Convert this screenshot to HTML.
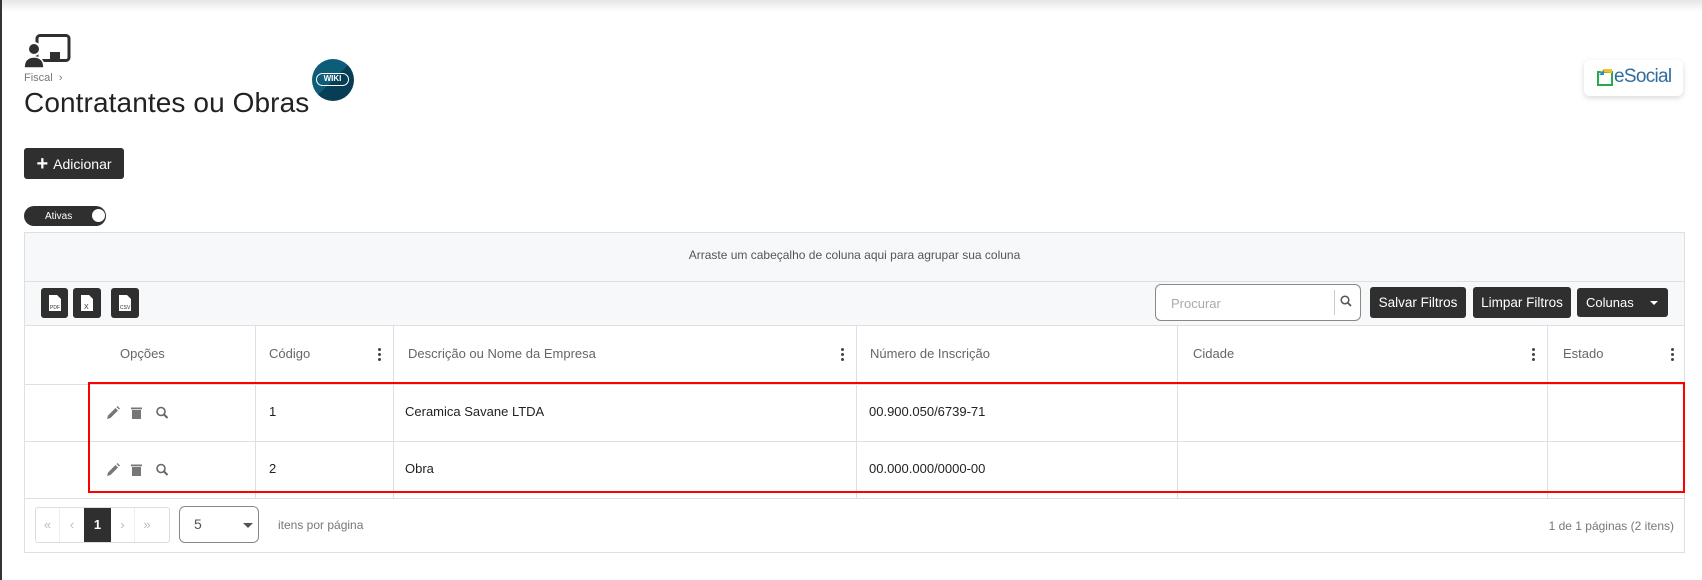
<!DOCTYPE html>
<html><head><meta charset="utf-8"><style>
*{box-sizing:border-box;margin:0;padding:0}
body{width:1702px;height:580px;overflow:hidden;background:#fff;font-family:"Liberation Sans",Arial,sans-serif;position:relative;color:#333}
.a{position:absolute}
.topsh{left:0;top:0;width:1702px;height:12px;background:linear-gradient(#e6e6e6,#fff)}
.lb{left:0;top:0;width:2px;height:580px;background:#333}
.btn{background:#2f2f2f;color:#fff;border-radius:3px;font-size:14px;display:flex;align-items:center;justify-content:center}
.tbl{left:24px;top:232px;width:1661px;height:321px;border:1px solid #dcdfe3;background:#fff}
.hl{height:1px;background:#dcdfe3;left:0;width:100%}
.vl{width:1px;background:#dcdfe3}
.th{font-size:13px;color:#666}
.td{font-size:13px;color:#222}
.dots{width:3px}
.dots i{display:block;width:3px;height:3px;background:#444;border-radius:50%;margin-bottom:2px}
</style></head><body>
<div class="a topsh"></div>
<div class="a lb"></div>

<svg class="a" style="left:24px;top:34px" width="48" height="34" viewBox="0 0 48 34">
<rect x="13" y="1.5" width="32" height="25" rx="3" fill="none" stroke="#2f2f2f" stroke-width="3"/>
<rect x="26" y="18" width="10" height="7" fill="#2f2f2f"/>
<circle cx="10" cy="15" r="6" fill="#2f2f2f" stroke="#fff" stroke-width="2"/>
<path d="M0 34 Q0 23 10 23 Q20 23 20 34Z" fill="#2f2f2f" stroke="#fff" stroke-width="1.5"/>
</svg>
<div class="a" style="left:24px;top:72px;font-size:11px;color:#777">Fiscal &nbsp;›</div>
<div class="a" style="left:24px;top:87px;font-size:28px;color:#222;letter-spacing:0.1px">Contratantes ou Obras</div>
<div class="a" style="left:312px;top:59px;width:42px;height:42px;border-radius:50%;background:linear-gradient(135deg,#0d5c78 50%,#083e55 50%)"></div>
<div class="a" style="left:316px;top:73px;width:33px;height:13px;border:1.5px solid #fff;border-radius:7px;color:#fff;font-size:8px;font-weight:bold;text-align:center;line-height:10px">WIKI</div>

<div class="a" style="left:1584px;top:60px;width:99px;height:36px;border-radius:6px;background:#fff;box-shadow:0 2px 6px rgba(0,0,0,.15)"></div>
<svg class="a" style="left:1597px;top:69px" width="16" height="17" viewBox="0 0 16 17"><rect x="1" y="3" width="14" height="13" fill="none" stroke="#2aa84a" stroke-width="2"/><path d="M3 3 L7 0 L15 0 L15 4" fill="#f2c027"/><path d="M2 6 L7 1 L7 6Z" fill="#2a8bd0"/></svg>
<div class="a" style="left:1614px;top:66px;font-size:19px;color:#2f6c9e;letter-spacing:-0.7px">eSocial</div>

<div class="a btn" style="left:24px;top:148px;width:100px;height:31px;font-size:14px"><span style="font-size:20px;font-weight:bold;margin-right:5px;line-height:10px">+</span>Adicionar</div>

<div class="a" style="left:24px;top:206px;width:82px;height:20px;border-radius:10px;background:#2f2f2f;color:#fff;font-size:10px;line-height:22px;padding-left:21px">Ativas</div>
<div class="a" style="left:92px;top:209px;width:13px;height:13px;border-radius:50%;background:#fff"></div>

<div class="a tbl">
 <div class="a" style="left:0;top:0;width:100%;height:92px;background:#f7f8fa"></div>
 <div class="a" style="left:0;top:15px;width:100%;text-align:center;font-size:12px;color:#555">Arraste um cabeçalho de coluna aqui para agrupar sua coluna</div>
 <div class="a hl" style="top:48px"></div>
 <div class="a hl" style="top:92px"></div>
 <div class="a hl" style="top:151px"></div>
 <div class="a hl" style="top:208px"></div>
 <div class="a hl" style="top:265px"></div>

 <div class="a btn" style="left:16px;top:55px;width:27px;height:30px"><svg width="12" height="16" viewBox="0 0 12 16"><path d="M0 0H8L12 4V16H0Z" fill="#fff"/><text x="1" y="14" font-size="5" fill="#2f2f2f" font-family="Liberation Sans">PDF</text></svg></div>
 <div class="a btn" style="left:48px;top:55px;width:28px;height:30px"><svg width="12" height="16" viewBox="0 0 12 16"><path d="M0 0H8L12 4V16H0Z" fill="#fff"/><text x="3" y="14" font-size="7" fill="#2f2f2f" font-family="Liberation Sans">X</text></svg></div>
 <div class="a btn" style="left:86px;top:55px;width:28px;height:30px"><svg width="12" height="16" viewBox="0 0 12 16"><path d="M0 0H8L12 4V16H0Z" fill="#fff"/><text x="1" y="14" font-size="5" fill="#2f2f2f" font-family="Liberation Sans">CSV</text></svg></div>

 <div class="a" style="left:1130px;top:51px;width:206px;height:37px;border:1px solid #888;border-radius:6px;background:#fff"></div>
 <div class="a" style="left:1146px;top:63px;font-size:13px;color:#aaa">Procurar</div>
 <div class="a" style="left:1309px;top:57px;width:1px;height:25px;background:#ccc"></div>
 <svg class="a" style="left:1315px;top:62px" width="12" height="12" viewBox="0 0 12 12"><circle cx="5" cy="5" r="3.8" fill="none" stroke="#555" stroke-width="1.5"/><path d="M8 8L11 11" stroke="#555" stroke-width="1.8"/></svg>
 <div class="a btn" style="left:1345px;top:54px;width:96px;height:31px;font-size:13.5px">Salvar Filtros</div>
 <div class="a btn" style="left:1448px;top:54px;width:98px;height:31px;font-size:13.5px">Limpar Filtros</div>
 <div class="a btn" style="left:1552px;top:55px;width:91px;height:29px;justify-content:flex-start;padding-left:9px;font-size:13px">Colunas<span style="margin-left:16px;width:0;height:0;border-left:4px solid transparent;border-right:4px solid transparent;border-top:4px solid #fff"></span></div>

 <div class="a vl" style="left:230px;top:92px;height:173px"></div>
 <div class="a vl" style="left:368px;top:92px;height:173px"></div>
 <div class="a vl" style="left:831px;top:92px;height:173px"></div>
 <div class="a vl" style="left:1152px;top:92px;height:173px"></div>
 <div class="a vl" style="left:1522px;top:92px;height:173px"></div>

 <div class="a th" style="left:95px;top:113px">Opções</div>
 <div class="a th" style="left:244px;top:113px">Código</div>
 <div class="a th" style="left:383px;top:113px">Descrição ou Nome da Empresa</div>
 <div class="a th" style="left:845px;top:113px">Número de Inscrição</div>
 <div class="a th" style="left:1168px;top:113px">Cidade</div>
 <div class="a th" style="left:1538px;top:113px">Estado</div>
 <div class="a dots" style="left:353px;top:115px"><i></i><i></i><i></i></div>
 <div class="a dots" style="left:816px;top:115px"><i></i><i></i><i></i></div>
 <div class="a dots" style="left:1507px;top:115px"><i></i><i></i><i></i></div>
 <div class="a dots" style="left:1646px;top:115px"><i></i><i></i><i></i></div>

 <div class="a td" style="left:244px;top:171px">1</div>
 <div class="a td" style="left:380px;top:171px">Ceramica Savane LTDA</div>
 <div class="a td" style="left:844px;top:171px">00.900.050/6739-71</div>
 <div class="a td" style="left:244px;top:228px">2</div>
 <div class="a td" style="left:380px;top:228px">Obra</div>
 <div class="a td" style="left:844px;top:228px">00.000.000/0000-00</div>

 <svg class="a" style="left:81px;top:173px" width="80" height="14" viewBox="0 0 80 14"><path d="M1 13L2 9.5L9.5 2L12 4.5L4.5 12Z" fill="#777"/><path d="M10.5 1L11.5 0L14 2.5L13 3.5Z" fill="#777"/><rect x="26" y="4" width="9" height="9" fill="#777"/><rect x="25" y="1.5" width="11" height="1.8" fill="#777"/><circle cx="55" cy="5.5" r="4" fill="none" stroke="#666" stroke-width="1.6"/><path d="M58 8.5L61.5 12" stroke="#666" stroke-width="2"/></svg>
 <svg class="a" style="left:81px;top:230px" width="80" height="14" viewBox="0 0 80 14"><path d="M1 13L2 9.5L9.5 2L12 4.5L4.5 12Z" fill="#777"/><path d="M10.5 1L11.5 0L14 2.5L13 3.5Z" fill="#777"/><rect x="26" y="4" width="9" height="9" fill="#777"/><rect x="25" y="1.5" width="11" height="1.8" fill="#777"/><circle cx="55" cy="5.5" r="4" fill="none" stroke="#666" stroke-width="1.6"/><path d="M58 8.5L61.5 12" stroke="#666" stroke-width="2"/></svg>

 <div class="a" style="left:10px;top:274px;width:135px;height:36px;border:1px solid #ddd;border-radius:3px;display:flex;font-size:13px;color:#bbb">
  <div style="width:24px;text-align:center;line-height:34px;border-right:1px solid #eee">«</div>
  <div style="width:24px;text-align:center;line-height:34px">‹</div>
  <div style="width:27px;text-align:center;line-height:34px;background:#2f2f2f;color:#fff;font-weight:bold">1</div>
  <div style="width:24px;text-align:center;line-height:34px;border-right:1px solid #eee">›</div>
  <div style="width:24px;text-align:center;line-height:34px">»</div>
 </div>
 <div class="a" style="left:154px;top:273px;width:80px;height:37px;border:1px solid #888;border-radius:6px"></div>
 <div class="a" style="left:169px;top:283px;font-size:14px;color:#555">5</div>
 <div class="a" style="left:218px;top:290px;border-left:5px solid transparent;border-right:5px solid transparent;border-top:5px solid #555"></div>
 <div class="a" style="left:253px;top:285px;font-size:12px;color:#777">itens por página</div>
 <div class="a" style="right:10px;top:286px;font-size:12px;color:#777">1 de 1 páginas (2 itens)</div>
</div>

<div class="a" style="left:88px;top:382px;width:1597px;height:111px;border:2px solid #f00"></div>
</body></html>
